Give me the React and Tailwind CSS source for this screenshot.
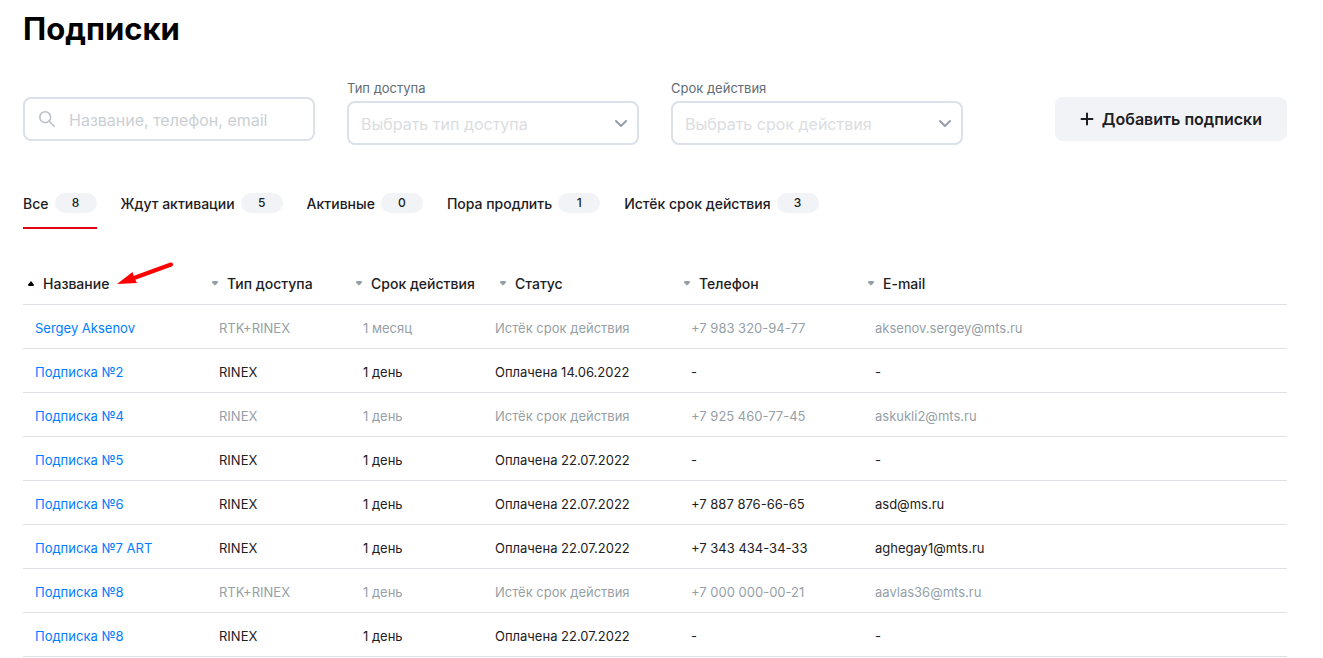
import { useState } from "react";

const tabs = [
  { label: "Все", count: 8 },
  { label: "Ждут активации", count: 5 },
  { label: "Активные", count: 0 },
  { label: "Пора продлить", count: 1 },
  { label: "Истёк срок действия", count: 3 },
];

const columns = [
  { title: "Название", width: "w-[184px]" },
  { title: "Тип доступа", width: "w-36" },
  { title: "Срок действия", width: "w-36" },
  { title: "Статус", width: "w-[184px]" },
  { title: "Телефон", width: "w-[184px]" },
  { title: "E-mail", width: "" },
];

const rows = [
  { name: "Sergey Aksenov", type: "RTK+RINEX", term: "1 месяц", status: "Истёк срок действия", phone: "+7 983 320-94-77", email: "aksenov.sergey@mts.ru", expired: true },
  { name: "Подписка №2", type: "RINEX", term: "1 день", status: "Оплачена 14.06.2022", phone: "-", email: "-" },
  { name: "Подписка №4", type: "RINEX", term: "1 день", status: "Истёк срок действия", phone: "+7 925 460-77-45", email: "askukli2@mts.ru", expired: true },
  { name: "Подписка №5", type: "RINEX", term: "1 день", status: "Оплачена 22.07.2022", phone: "-", email: "-" },
  { name: "Подписка №6", type: "RINEX", term: "1 день", status: "Оплачена 22.07.2022", phone: "+7 887 876-66-65", email: "asd@ms.ru" },
  { name: "Подписка №7 ART", type: "RINEX", term: "1 день", status: "Оплачена 22.07.2022", phone: "+7 343 434-34-33", email: "aghegay1@mts.ru" },
  { name: "Подписка №8", type: "RTK+RINEX", term: "1 день", status: "Истёк срок действия", phone: "+7 000 000-00-21", email: "aavlas36@mts.ru", expired: true },
  { name: "Подписка №8", type: "RINEX", term: "1 день", status: "Оплачена 22.07.2022", phone: "-", email: "-" },
];

function FilterSelect({ id, label, placeholder }) {
  return (
    <div className="w-[292px]">
      <label htmlFor={id} className="block mb-[3px] text-[13px] leading-5 text-[#626c77]">{label}</label>
      <div className="relative">
        <select
          id={id}
          defaultValue=""
          className="w-full h-11 pl-3 pr-10 pt-0.5 appearance-none bg-white border-2 border-[#dce0e8] rounded-lg text-base text-[#dbdde1]"
        >
          <option value="">{placeholder}</option>
        </select>
        <svg className="absolute right-3 top-4 w-3 h-3 pointer-events-none" viewBox="0 0 12 12" fill="none">
          <path d="M1 4 L6 9 L11 4" stroke="#969fa8" strokeWidth="2" strokeLinecap="round" strokeLinejoin="round" />
        </svg>
      </div>
    </div>
  );
}

function SortIcon({ active }) {
  return (
    <svg className="w-2 h-2 shrink-0" viewBox="0 0 8 8">
      {active ? (
        <path d="M4 1 L6.8 4.4 Q7.2 6 6 6 L2 6 Q0.8 6 1.2 4.4 Z" fill="#000" />
      ) : (
        <path d="M2 1 L6 1 Q7.8 1.2 6.8 2.7 L4.8 5.1 Q4 5.9 3.2 5.1 L1.2 2.7 Q0.2 1.2 2 1 Z" fill="#969fa8" />
      )}
    </svg>
  );
}

export default function App() {
  const [activeTab, setActiveTab] = useState(0);

  return (
    <main className="pl-[23px] pr-9 pt-2 bg-white text-[#1d2023] font-[Inter,sans-serif]">
      <h1 className="text-[31px] leading-[42px] font-bold text-black">Подписки</h1>

      <div className="mt-7 flex items-end gap-8">
        <div className="relative w-[292px] mb-1">
          <svg className="absolute left-4 top-3.5 w-4 h-4" viewBox="0 0 16 16" fill="none" stroke="#bbc1c7" strokeWidth="1.6" strokeLinecap="round">
            <circle cx="6.2" cy="6.2" r="5.4" />
            <path d="M10.2 10.2 L15.2 15.2" />
          </svg>
          <input
            type="text"
            aria-label="Поиск"
            placeholder="Название, телефон, email"
            className="block w-full h-11 pl-11 pr-3 pt-0.5 border-2 border-[#dce0e8] rounded-lg text-base placeholder:text-[#cbcfd4]"
          />
        </div>
        <FilterSelect id="type" label="Тип доступа" placeholder="Выбрать тип доступа" />
        <FilterSelect id="term" label="Срок действия" placeholder="Выбрать срок действия" />
        <button type="button" className="ml-auto mb-1 h-11 px-[25px] flex items-center gap-2 rounded-lg bg-[#f2f3f7] text-base font-semibold">
          <svg className="w-3.5 h-3.5" viewBox="0 0 14 14" stroke="#1d2023" strokeWidth="2" strokeLinecap="round">
            <path d="M7 1.5 V12.5 M1.5 7 H12.5" />
          </svg>
          Добавить подписки
        </button>
      </div>

      <div className="mt-12 flex gap-6">
        {tabs.map((tab, i) => (
          <button
            key={tab.label}
            type="button"
            onClick={() => setActiveTab(i)}
            className={`pb-3.5 flex items-center gap-1.5 border-b-2 text-sm font-medium ${i === activeTab ? "border-[#e30611]" : "border-transparent"}`}
          >
            <span className="h-5 pt-px leading-5">{tab.label}</span>
            <span className="w-[42px] h-5 rounded-full bg-[#f2f3f7] text-xs leading-5 text-center">{tab.count}</span>
          </button>
        ))}
      </div>

      <table className="mt-8 w-full table-fixed border-separate border-spacing-0 text-[13px] text-left">
        <thead>
          <tr>
            {columns.map((col, i) => (
              <th key={col.title} className={`h-11 p-0 pl-1 pt-0.5 border-b border-[#dfe1e8] text-sm font-medium whitespace-nowrap ${col.width}`}>
                <span className="relative inline-flex items-center gap-2">
                  <SortIcon active={i === 0} />
                  {col.title}
                  {i === 0 && (
                    <svg className="absolute left-full -top-3 ml-2 w-[58px] h-6" viewBox="0 0 58 24">
                      <path d="M54 2.5 L17 16" stroke="#fe0000" strokeWidth="4" strokeLinecap="round" />
                      <path d="M0 22 L15.5 10 L17 15 L20 21 Z" fill="#fe0000" />
                    </svg>
                  )}
                </span>
              </th>
            ))}
          </tr>
        </thead>
        <tbody>
          {rows.map((row, i) => (
            <tr key={i} className={row.expired ? "text-[#969fa8]" : ""}>
              <td className="h-11 p-0 pt-1 pl-3 border-b border-[#dfe1e8]">
                <a href="#" className="text-[#007cff]">{row.name}</a>
              </td>
              <td className="p-0 pt-1 pl-3 border-b border-[#dfe1e8]">{row.type}</td>
              <td className="p-0 pt-1 pl-3 border-b border-[#dfe1e8]">{row.term}</td>
              <td className="p-0 pt-1 border-b border-[#dfe1e8]">{row.status}</td>
              <td className="p-0 pt-1 pl-3 border-b border-[#dfe1e8]">{row.phone}</td>
              <td className="p-0 pt-1 pl-3 border-b border-[#dfe1e8]">{row.email}</td>
            </tr>
          ))}
        </tbody>
      </table>
    </main>
  );
}
